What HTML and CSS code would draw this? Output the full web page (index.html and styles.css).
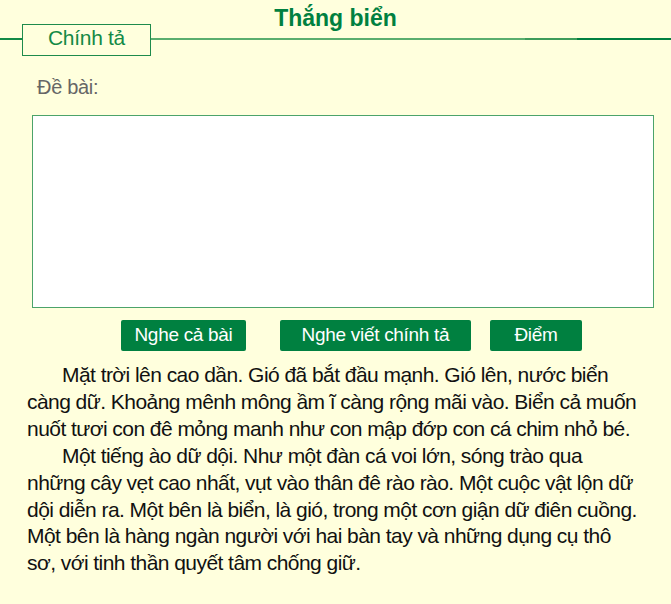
FILE: index.html
```html
<!DOCTYPE html>
<html lang="vi">
<head>
<meta charset="utf-8">
<title>Thắng biển</title>
<link rel="stylesheet" href="styles.css">
</head>
<body>
<div class="page">
  <h1 class="title">Thắng biển</h1>
  <div class="tabbar">
    <span class="rule rule-left"></span>
    <div class="tab">Chính tả</div>
    <span class="rule rule-right"></span>
  </div>
  <div class="label">Đề bài:</div>
  <div class="answer"></div>
  <div class="actions">
    <button class="btn btn-listen">Nghe cả bài</button>
    <button class="btn btn-dictate">Nghe viết chính tả</button>
    <button class="btn btn-score">Điểm</button>
  </div>
  <div class="passage">
    <p>Mặt trời lên cao dần. Gió đã bắt đầu mạnh. Gió lên, nước biển<br>càng dữ. Khoảng mênh mông ầm ĩ càng rộng mãi vào. Biển cả muốn<br>nuốt tươi con đê mỏng manh như con mập đớp con cá chim nhỏ bé.</p>
    <p>Một tiếng ào dữ dội. Như một đàn cá voi lớn, sóng trào qua<br>những cây vẹt cao nhất, vụt vào thân đê rào rào. Một cuộc vật lộn dữ<br>dội diễn ra. Một bên là biển, là gió, trong một cơn giận dữ điên cuồng.<br>Một bên là hàng ngàn người với hai bàn tay và những dụng cụ thô<br>sơ, với tinh thần quyết tâm chống giữ.</p>
  </div>
</div>
</body>
</html>
```
FILE: styles.css
```css
html, body {
  margin: 0;
  padding: 0;
  background: #ffffdd;
}
body {
  font-family: "Liberation Sans", Arial, sans-serif;
  color: #111;
}
.page {
  width: 671px;
  min-height: 604px;
}
.title {
  margin: 0;
  padding-top: 5px;
  font-size: 23px;
  line-height: 26px;
  font-weight: bold;
  color: #008040;
  text-align: center;
}
.tabbar {
  display: flex;
  align-items: center;
  margin-top: -7px;
  height: 32px;
}
.rule {
  height: 2px;
  margin-top: -2px;
}
.rule-left {
  width: 22px;
  background: #138a46;
}
.rule-right {
  flex: 1;
  background: linear-gradient(to right, #5aae6e 0%, #5aae6e 72%, #3d9c5a 72%, #3d9c5a 82%, #008040 82%, #008040 100%);
}
.tab {
  box-sizing: border-box;
  width: 129px;
  height: 32px;
  padding: 0 0 4px;
  border: 1px solid #1e8b4c;
  font-size: 21px;
  line-height: 26px;
  letter-spacing: -0.3px;
  text-align: center;
  color: #138a46;
}
.label {
  margin-top: 20px;
  padding-left: 37px;
  font-size: 20px;
  line-height: 23px;
  letter-spacing: -0.3px;
  color: #666;
}
.answer {
  box-sizing: border-box;
  margin: 16px 0 0 32px;
  width: 622px;
  height: 193px;
  background: #fff;
  border: 1px solid #4ca36a;
}
.actions {
  display: flex;
  margin-top: 12px;
  padding-left: 121px;
}
.btn {
  box-sizing: border-box;
  height: 31px;
  padding: 0 0 2px;
  border: none;
  border-radius: 2px;
  background: #008040;
  color: #fff;
  font-family: "Liberation Sans", Arial, sans-serif;
  font-size: 19px;
  line-height: 28px;
  letter-spacing: -0.3px;
  text-align: center;
}
.btn-listen { width: 125px; }
.btn-dictate { width: 191px; margin-left: 34px; }
.btn-score { width: 92px; margin-left: 19px; }
.passage {
  margin-top: 11px;
  margin-left: 27px;
  width: 644px;
  font-size: 21px;
  line-height: 26.9px;
  letter-spacing: -0.55px;
  white-space: nowrap;
  color: #111;
}
.passage p {
  margin: 0;
  text-indent: 35px;
}
```
